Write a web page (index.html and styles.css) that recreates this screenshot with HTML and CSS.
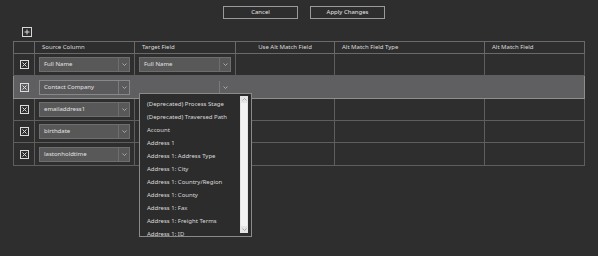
FILE: index.html
```html
<!DOCTYPE html>
<html>
<head>
<meta charset="utf-8">
<link rel="stylesheet" href="styles.css">
</head>
<body>
<div class="page">
  <div class="toolbar">
    <button class="btn">Cancel</button>
    <button class="btn">Apply Changes</button>
  </div>
  <div class="add-row">
    <span class="add-icon"><svg width="10" height="10" viewBox="0 0 10 10"><rect x="0.5" y="0.5" width="9" height="9" fill="none" stroke="#d8d8d8"/><path d="M5 2.5V7.5M2.5 5H7.5" stroke="#d8d8d8" stroke-width="1"/></svg></span>
  </div>
  <table class="grid">
    <colgroup>
      <col class="c1"><col class="c2"><col class="c3"><col class="c4"><col class="c5"><col class="c6">
    </colgroup>
    <thead>
      <tr>
        <th></th>
        <th>Source Column</th>
        <th>Target Field</th>
        <th class="center">Use Alt Match Field</th>
        <th>Alt Match Field Type</th>
        <th>Alt Match Field</th>
      </tr>
    </thead>
    <tbody>
      <tr>
        <td class="del"><span class="x-icon"><svg width="9" height="9" viewBox="0 0 9 9"><rect x="0.5" y="0.5" width="8" height="8" fill="none" stroke="#dcdcdc"/><path d="M2.5 2.5L6.5 6.5M6.5 2.5L2.5 6.5" stroke="#dcdcdc" stroke-width="1"/></svg></span></td>
        <td><div class="combo"><span class="val">Full Name</span><span class="arr"><svg width="5" height="3" viewBox="0 0 5 3"><path d="M0.5 0.5L2.5 2.5L4.5 0.5" fill="none" stroke="#bbb" stroke-width="0.8"/></svg></span></div></td>
        <td><div class="combo"><span class="val">Full Name</span><span class="arr"><svg width="5" height="3" viewBox="0 0 5 3"><path d="M0.5 0.5L2.5 2.5L4.5 0.5" fill="none" stroke="#bbb" stroke-width="0.8"/></svg></span></div></td>
        <td></td><td></td><td></td>
      </tr>
      <tr class="selected">
        <td class="del"><span class="x-icon"><svg width="9" height="9" viewBox="0 0 9 9"><rect x="0.5" y="0.5" width="8" height="8" fill="none" stroke="#dcdcdc"/><path d="M2.5 2.5L6.5 6.5M6.5 2.5L2.5 6.5" stroke="#dcdcdc" stroke-width="1"/></svg></span></td>
        <td><div class="combo"><span class="val">Contact Company</span><span class="arr"><svg width="5" height="3" viewBox="0 0 5 3"><path d="M0.5 0.5L2.5 2.5L4.5 0.5" fill="none" stroke="#bbb" stroke-width="0.8"/></svg></span></div></td>
        <td><div class="combo open"><span class="val"></span><span class="arr"><svg width="5" height="3" viewBox="0 0 5 3"><path d="M0.5 0.5L2.5 2.5L4.5 0.5" fill="none" stroke="#bbb" stroke-width="0.8"/></svg></span></div></td>
        <td></td><td></td><td></td>
      </tr>
      <tr>
        <td class="del"><span class="x-icon"><svg width="9" height="9" viewBox="0 0 9 9"><rect x="0.5" y="0.5" width="8" height="8" fill="none" stroke="#dcdcdc"/><path d="M2.5 2.5L6.5 6.5M6.5 2.5L2.5 6.5" stroke="#dcdcdc" stroke-width="1"/></svg></span></td>
        <td><div class="combo"><span class="val">emailaddress1</span><span class="arr"><svg width="5" height="3" viewBox="0 0 5 3"><path d="M0.5 0.5L2.5 2.5L4.5 0.5" fill="none" stroke="#bbb" stroke-width="0.8"/></svg></span></div></td>
        <td></td><td></td><td></td><td></td>
      </tr>
      <tr>
        <td class="del"><span class="x-icon"><svg width="9" height="9" viewBox="0 0 9 9"><rect x="0.5" y="0.5" width="8" height="8" fill="none" stroke="#dcdcdc"/><path d="M2.5 2.5L6.5 6.5M6.5 2.5L2.5 6.5" stroke="#dcdcdc" stroke-width="1"/></svg></span></td>
        <td><div class="combo"><span class="val">birthdate</span><span class="arr"><svg width="5" height="3" viewBox="0 0 5 3"><path d="M0.5 0.5L2.5 2.5L4.5 0.5" fill="none" stroke="#bbb" stroke-width="0.8"/></svg></span></div></td>
        <td></td><td></td><td></td><td></td>
      </tr>
      <tr class="last">
        <td class="del"><span class="x-icon"><svg width="9" height="9" viewBox="0 0 9 9"><rect x="0.5" y="0.5" width="8" height="8" fill="none" stroke="#dcdcdc"/><path d="M2.5 2.5L6.5 6.5M6.5 2.5L2.5 6.5" stroke="#dcdcdc" stroke-width="1"/></svg></span></td>
        <td><div class="combo"><span class="val">lastonholdtime</span><span class="arr"><svg width="5" height="3" viewBox="0 0 5 3"><path d="M0.5 0.5L2.5 2.5L4.5 0.5" fill="none" stroke="#bbb" stroke-width="0.8"/></svg></span></div></td>
        <td></td><td></td><td></td><td></td>
      </tr>
    </tbody>
  </table>
  <div class="dropdown">
    <ul class="items">
      <li>(Deprecated) Process Stage</li>
      <li>(Deprecated) Traversed Path</li>
      <li>Account</li>
      <li>Address 1</li>
      <li>Address 1: Address Type</li>
      <li>Address 1: City</li>
      <li>Address 1: Country/Region</li>
      <li>Address 1: County</li>
      <li>Address 1: Fax</li>
      <li>Address 1: Freight Terms</li>
      <li>Address 1: ID</li>
    </ul>
    <div class="scrollbar">
      <span class="sb-up"><svg width="5" height="3" viewBox="0 0 5 3"><path d="M0.5 2.5L2.5 0.5L4.5 2.5" fill="none" stroke="#999" stroke-width="0.8"/></svg></span>
      <span class="sb-thumb"></span>
      <span class="sb-down"><svg width="5" height="3" viewBox="0 0 5 3"><path d="M0.5 0.5L2.5 2.5L4.5 0.5" fill="none" stroke="#999" stroke-width="0.8"/></svg></span>
    </div>
  </div>
</div>
</body>
</html>
```

FILE: styles.css
```css
html, body {
  margin: 0;
  padding: 0;
  background: #2e2e2e;
}
body {
  width: 598px;
  height: 256px;
  overflow: hidden;
  font-family: "Noto Sans", "Open Sans", sans-serif;
  font-size: 6px;
  color: #dcdcdc;
}
.page {
  position: relative;
  width: 598px;
  height: 256px;
}
.toolbar {
  display: flex;
  gap: 12px;
  padding: 6px 0 0 223px;
  height: 13px;
}
.btn {
  box-sizing: border-box;
  width: 75px;
  height: 13px;
  margin: 0;
  padding: 0;
  background: #2e2e2e;
  border: 1px solid #9a9a9a;
  color: #e6e6e6;
  font-family: inherit;
  font-size: 6px;
  line-height: 11px;
}
.add-row {
  padding: 8px 0 0 22px;
  height: 14px;
}
.add-icon {
  display: block;
  width: 10px;
  height: 10px;
}
.add-icon svg, .x-icon svg, .arr svg, .sb-up svg, .sb-down svg {
  display: block;
}
.grid {
  margin-left: 13px;
  border-collapse: collapse;
  table-layout: fixed;
  width: 571px;
}
.c1 { width: 21px; }
.c2 { width: 100px; }
.c3 { width: 101px; }
.c4 { width: 99px; }
.c5 { width: 150px; }
.c6 { width: 100px; }
.grid th, .grid td {
  border: 1px solid #5e5e5e;
  padding: 0;
}
.grid th {
  height: 11px;
  font-weight: normal;
  text-align: left;
  padding-left: 7px;
  color: #dcdcdc;
  line-height: 11px;
  white-space: nowrap;
  border-color: #6a6a6a;
}
.grid th.center {
  text-align: center;
  padding-left: 0;
}
.grid td {
  height: 21px;
  vertical-align: middle;
}
.grid tr.selected td,
.grid tr.last td {
  height: 22px;
}
.grid tr.selected td {
  background: #5f5f61;
  border-top-color: #8e8e8e;
  border-bottom-color: #8e8e8e;
}
.grid tr.selected td:first-child { border-left-color: #8e8e8e; }
.grid tr.selected td:last-child { border-right-color: #8e8e8e; }
.del { text-align: center; }
.x-icon {
  display: inline-block;
  width: 9px;
  height: 9px;
  vertical-align: middle;
}
.combo {
  box-sizing: border-box;
  display: flex;
  align-items: stretch;
  height: 15px;
  margin: 0 4px 0 4px;
  background: #585858;
  border: 1px solid #6e6e6e;
}
.selected .combo {
  border-color: #888;
  background: #5a5a5c;
}
.selected .combo.open {
  border-color: transparent;
  background: transparent;
}
.combo .val {
  flex: 1;
  padding-left: 4px;
  line-height: 13px;
  color: #e2e2e2;
  white-space: nowrap;
  overflow: hidden;
}
.combo .arr {
  width: 10px;
  border-left: 1px solid #6e6e6e;
  display: flex;
  align-items: center;
  justify-content: center;
}
.selected .combo .arr { border-left-color: #7a7a7a; }
.dropdown {
  position: absolute;
  left: 139px;
  top: 93px;
  width: 113px;
  height: 144px;
  box-sizing: border-box;
  border: 1px solid #8a8a8a;
  background: #2c2c2c;
  display: flex;
  overflow: hidden;
}
.items {
  list-style: none;
  margin: 0;
  padding: 4px 0 0 7px;
  flex: 1;
  overflow: hidden;
}
.items li {
  height: 13px;
  line-height: 13px;
  white-space: nowrap;
  color: #dadada;
}
.scrollbar {
  width: 8px;
  margin: 2px 3px 3px 0;
  background: #e4e4e4;
  display: flex;
  flex-direction: column;
}
.sb-up, .sb-down {
  height: 7px;
  display: flex;
  align-items: center;
  justify-content: center;
}
.sb-thumb {
  flex: 1;
  margin: 0 1px;
  background: #f2f2f2;
}
```
